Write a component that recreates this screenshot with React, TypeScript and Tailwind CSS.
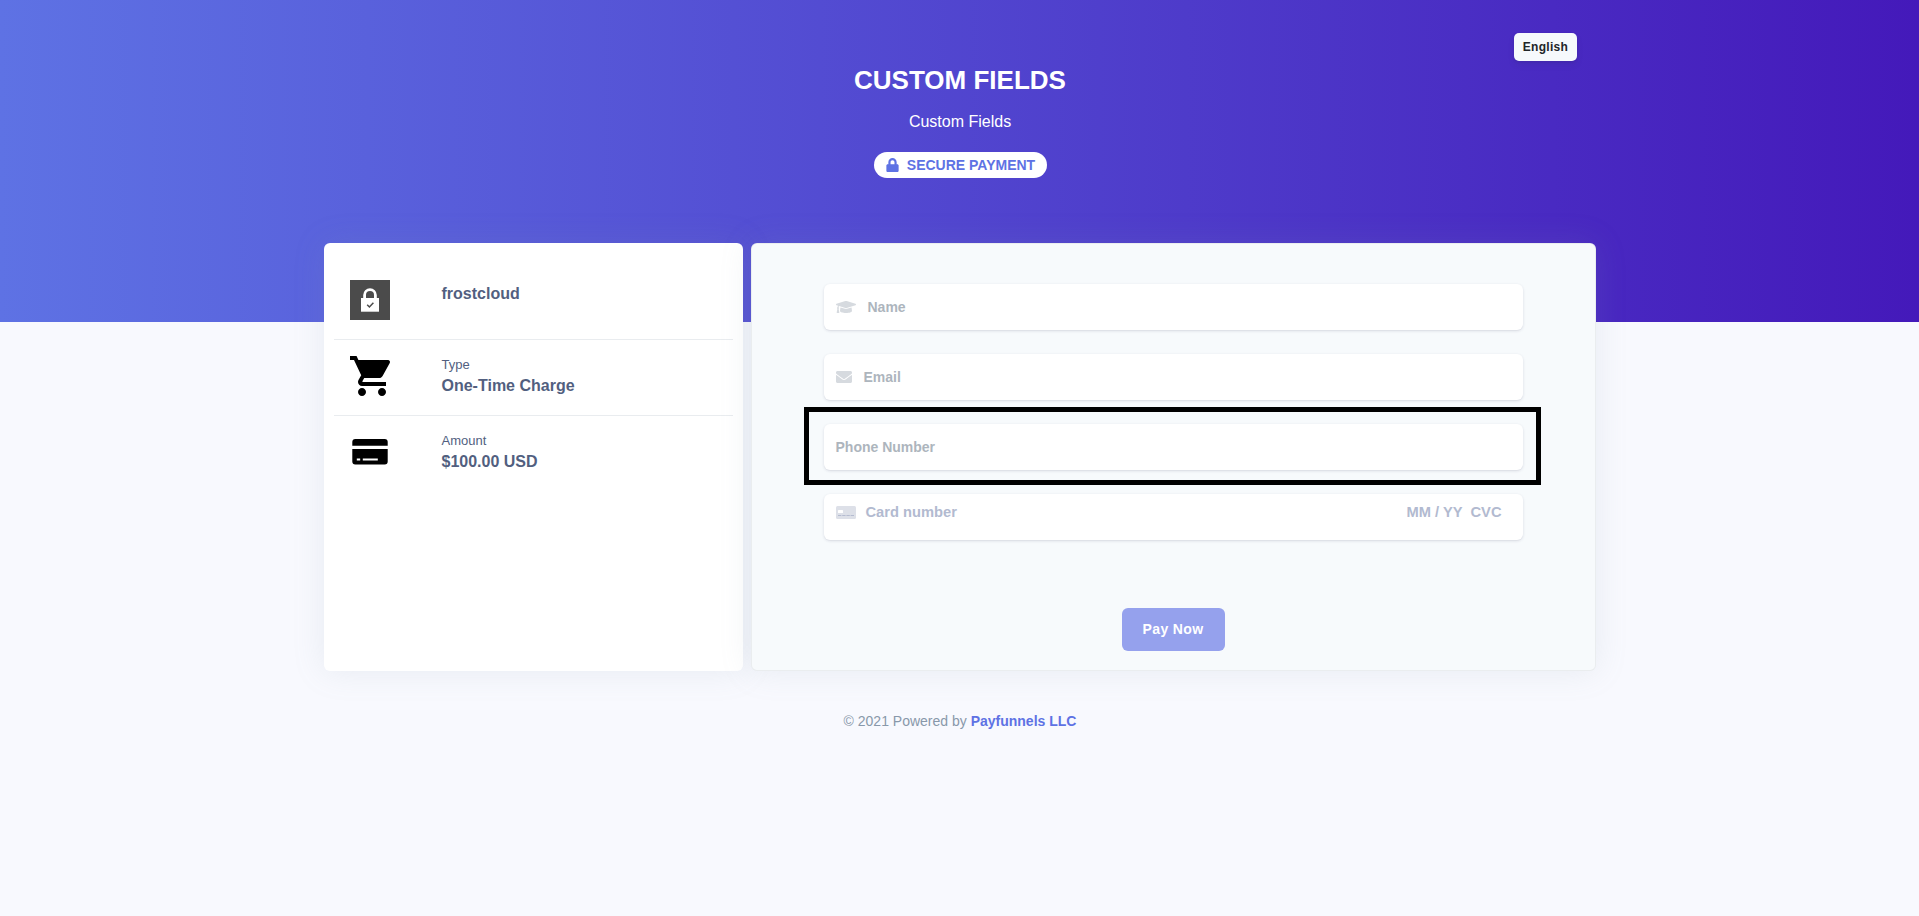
import { FaEnvelope, FaGraduationCap, FaLock } from "react-icons/fa";
import { MdShoppingCart } from "react-icons/md";

const MerchantLogo = () => (
  <svg width="40" height="40" viewBox="0 0 40 40">
    <rect width="40" height="40" fill="#4b4b4b" />
    <path d="M14.600 19v-4a5.400 5.400 0 0 1 10.800 0v4" fill="none" stroke="#fff" strokeWidth="2.800" />
    <rect x="11" y="18" width="18" height="14" fill="#fff" />
    <rect x="11" y="31" width="18" height="1" fill="#c9c9c9" />
    <path d="M17.200 24.800l2.200 2.200 4-4.200" fill="none" stroke="#4b4b4b" strokeWidth="1.500" />
  </svg>
);

const AmountIcon = () => (
  <svg width="40" height="40" viewBox="0 0 40 40">
    <path d="M2.300 13.800V10q0-3 3-3h29.400q3 0 3 3v3.800z" />
    <path d="M2.300 17h35.400v12.500q0 3-3 3H5.300q-3 0-3-3z" />
    <path d="M6.800 27.400h3.400M12.800 27.400h15" stroke="#fff" strokeWidth="2" />
  </svg>
);

const CardIcon = () => (
  <svg width="20" height="13" viewBox="0 0 20 13">
    <rect width="20" height="13" rx="1.500" fill="#dde0e8" />
    <rect x="2" y="4" width="5" height="3" rx=".5" fill="#fff" />
    <path d="M2 9.500h16" stroke="#b5bcd0" strokeDasharray="3.400 .8" />
  </svg>
);

type DetailProps = {
  icon: React.ReactNode;
  label?: string;
  value: string;
};

const Detail = ({ icon, label, value }: DetailProps) => (
  <div className="flex h-[76px] border-b border-[#e9ecef] pl-4 last:border-0">
    <div className="mt-4 h-10 w-23">{icon}</div>
    <div className="pt-[15px] text-[#525f7f]">
      {label && <p className="text-[13px] leading-[20px]">{label}</p>}
      <p className={label ? "text-base leading-[22px] font-bold" : "pt-1 text-base leading-[22px] font-bold"}>
        {value}
      </p>
    </div>
  </div>
);

const field =
  "flex h-[46px] items-center rounded-md bg-white pl-3 text-[14px] font-bold text-[#adb5bd] shadow-[0_1px_3px_rgba(50,50,93,.15),0_1px_0_rgba(0,0,0,.02)]";

function App() {
  return (
    <div className="min-h-screen bg-[#f8f9fe] font-['Liberation_Sans',sans-serif]">
      <header className="relative h-[322px] bg-[linear-gradient(90deg,#5e72e4,#4419ba)] pt-16 pl-px text-center text-white">
        <button className="absolute top-[33px] left-[1514px] h-7 w-[63px] rounded-[5px] bg-[#f6f9fc] text-[12px] font-bold tracking-[.3px] text-[#212529] shadow-[0_4px_6px_rgba(50,50,93,.11),0_1px_3px_rgba(0,0,0,.08)]">
          English
        </button>
        <h1 className="text-[26px] leading-8 font-bold">CUSTOM FIELDS</h1>
        <p className="mt-[14px] text-base leading-6">Custom Fields</p>
        <span className="mt-[18px] ml-px inline-flex h-[26px] w-[173px] items-center justify-center rounded-full bg-white text-[14px] font-bold text-[#5e72e4]">
          <FaLock className="mr-2 h-[14px] w-[13px]" />
          SECURE PAYMENT
        </span>
      </header>
      <main className="relative mx-auto -mt-[79px] flex w-[1272px] gap-2">
        <section className="h-[428px] w-[419px] rounded-md bg-white px-[10px] pt-[21px] shadow-[0_0_32px_rgba(136,152,170,.15)]">
          <Detail icon={<MerchantLogo />} value="frostcloud" />
          <Detail
            icon={<MdShoppingCart size={48} className="-mt-1 -ml-0.5 text-black" />}
            label="Type"
            value="One-Time Charge"
          />
          <Detail icon={<AmountIcon />} label="Amount" value="$100.00 USD" />
        </section>
        <section className="h-[428px] w-[845px] rounded-md border border-black/5 bg-[#f7fafc] px-[72px] pt-10 shadow-[0_0_32px_rgba(136,152,170,.15)]">
          <div className="flex flex-col gap-6">
            <div className={field}>
              <FaGraduationCap className="mr-3 h-4 w-5 text-[#d6dadf]" />
              Name
            </div>
            <div className={field}>
              <FaEnvelope className="mr-3 size-4 text-[#d6dadf]" />
              Email
            </div>
            <div className="relative">
              <div className={field}>Phone Number</div>
              <div className="absolute -top-[17px] -left-5 h-[78px] w-[737px] border-5 border-black" />
            </div>
            <div className={field}>
              <div className="-mt-[9px] flex w-full items-center pr-[21px] text-[14.7px] text-[#b2bad0]">
                <CardIcon />
                <span className="ml-[10px] flex-1">Card number</span>
                <span className="mr-2">MM / YY</span>
                <span>CVC</span>
              </div>
            </div>
          </div>
          <button className="mx-auto mt-[68px] block h-[43px] w-[103px] rounded-md bg-[#95a1ed] text-[14px] font-bold tracking-[.35px] text-white">
            Pay Now
          </button>
        </section>
      </main>
      <footer className="mt-10 pl-px text-center text-[14px] leading-[21px] text-[#8898aa]">
        © 2021 Powered by <span className="font-bold text-[#5e72e4]">Payfunnels LLC</span>
      </footer>
    </div>
  );
}

export default App;
